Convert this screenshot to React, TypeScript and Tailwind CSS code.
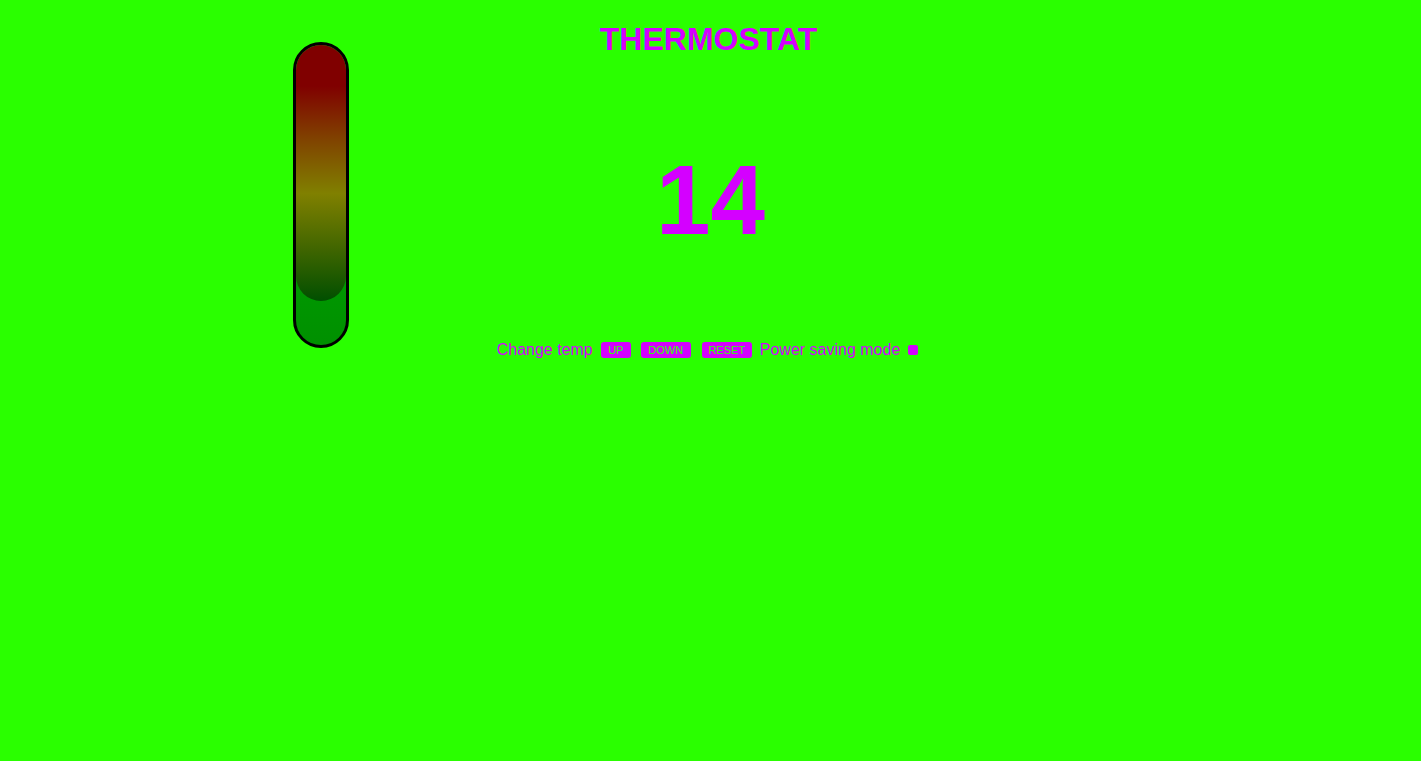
const App = () => {
  return (
    <div className="grid min-h-screen w-full bg-[#2aff00] font-['Liberation_Sans',Arial,sans-serif] text-[#d400ff]">
      <div className="col-start-1 row-start-1 ml-[293px] mt-[42px] h-[306px] w-[56px] self-start justify-self-start overflow-hidden rounded-full border-[3px] border-black bg-[linear-gradient(#00b400,#009000)]">
        <div className="h-[256px] w-full rounded-b-full bg-[linear-gradient(#800000_16%,#804000_36%,#808000_58%,#3f6500_80%,#004f00_100%)]" />
      </div>
      <div className="col-start-1 row-start-1 flex flex-col items-center self-start">
        <h1 className="mt-[21px] -translate-x-[2px] text-[32px] font-bold leading-[37px]">THERMOSTAT</h1>
        <div className="mt-[86px] text-[98px] font-bold leading-[112px]">14</div>
        <div className="mt-[85px] flex -translate-x-[3px] items-center text-[16px] leading-[18px]">
          <span>Change temp</span>
          <button className="ml-[8px] h-[16px] w-[30px] rounded-[3px] bg-[#d400ff] text-[11px] leading-[16px] text-[#2aff00]">UP</button>
          <button className="ml-[10px] h-[16px] w-[50px] rounded-[3px] bg-[#d400ff] text-[11px] leading-[16px] text-[#2aff00]">DOWN</button>
          <button className="ml-[11px] h-[16px] w-[50px] rounded-[3px] bg-[#d400ff] text-[11px] leading-[16px] text-[#2aff00]">RESET</button>
          <span className="ml-[8px]">Power saving mode</span>
          <span className="ml-[8px] h-[10px] w-[10px] rounded-[2px] bg-[#d400ff]" />
        </div>
      </div>
    </div>
  );
};

export default App;
